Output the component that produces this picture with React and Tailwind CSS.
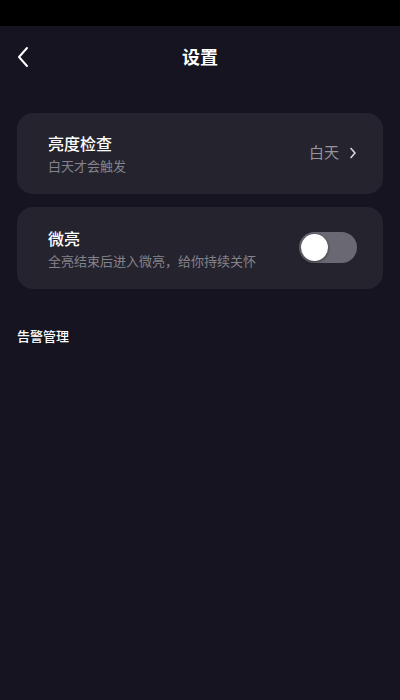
export default function App() {
  return (
    <div
      className="w-[400px] h-[700px] bg-[#151420] flex flex-col"
      style={{ fontFamily: '"Noto Sans CJK SC", "Noto Sans", sans-serif' }}
    >
      <div className="h-[26px] bg-black shrink-0" />
      <div className="h-[62px] flex items-center justify-center relative shrink-0">
        <svg
          className="absolute left-[15px] top-[20px]"
          width="16"
          height="22"
          viewBox="0 0 16 22"
          fill="none"
          stroke="white"
          strokeWidth="2"
          strokeLinecap="round"
          strokeLinejoin="round"
        >
          <path d="M12 2 L4 11 L12 20" />
        </svg>
        <span className="text-white text-[18px] font-bold mt-[-2px]">设置</span>
      </div>
      <div className="px-[17px] pt-[25px] flex flex-col gap-[13px]">
        <div className="bg-[#25242e] rounded-[16px] h-[81px] pl-[31px] pr-[26px] flex items-center justify-between">
          <div className="flex flex-col">
            <span className="text-white text-[16px] font-medium leading-[22px]">亮度检查</span>
            <span className="text-[#84838c] text-[13px] leading-[18px] mt-[3px]">白天才会触发</span>
          </div>
          <div className="flex items-center gap-[10px] mt-[-2px]">
            <span className="text-[#95949b] text-[15px]">白天</span>
            <svg width="8" height="12" viewBox="0 0 8 12" fill="none" stroke="#d8d8dc" strokeWidth="1.6" strokeLinecap="round" strokeLinejoin="round">
              <path d="M2 1.5 L6 6 L2 10.5" />
            </svg>
          </div>
        </div>
        <div className="bg-[#25242e] rounded-[16px] h-[82px] pl-[31px] pr-[26px] flex items-center justify-between">
          <div className="flex flex-col">
            <span className="text-white text-[16px] font-medium leading-[22px]">微亮</span>
            <span className="text-[#84838c] text-[13px] leading-[18px] mt-[3px]">全亮结束后进入微亮，给你持续关怀</span>
          </div>
          <div className="w-[58px] h-[31px] rounded-full bg-[#6a6973] flex items-center pl-[2px] mt-[-2px]">
            <div className="w-[27px] h-[27px] rounded-full bg-white shadow-[0_1px_3px_rgba(0,0,0,0.5)]" />
          </div>
        </div>
      </div>
      <div className="px-[17px] mt-[33px]">
        <span className="text-white text-[13px] font-medium">告警管理</span>
      </div>
    </div>
  );
}
